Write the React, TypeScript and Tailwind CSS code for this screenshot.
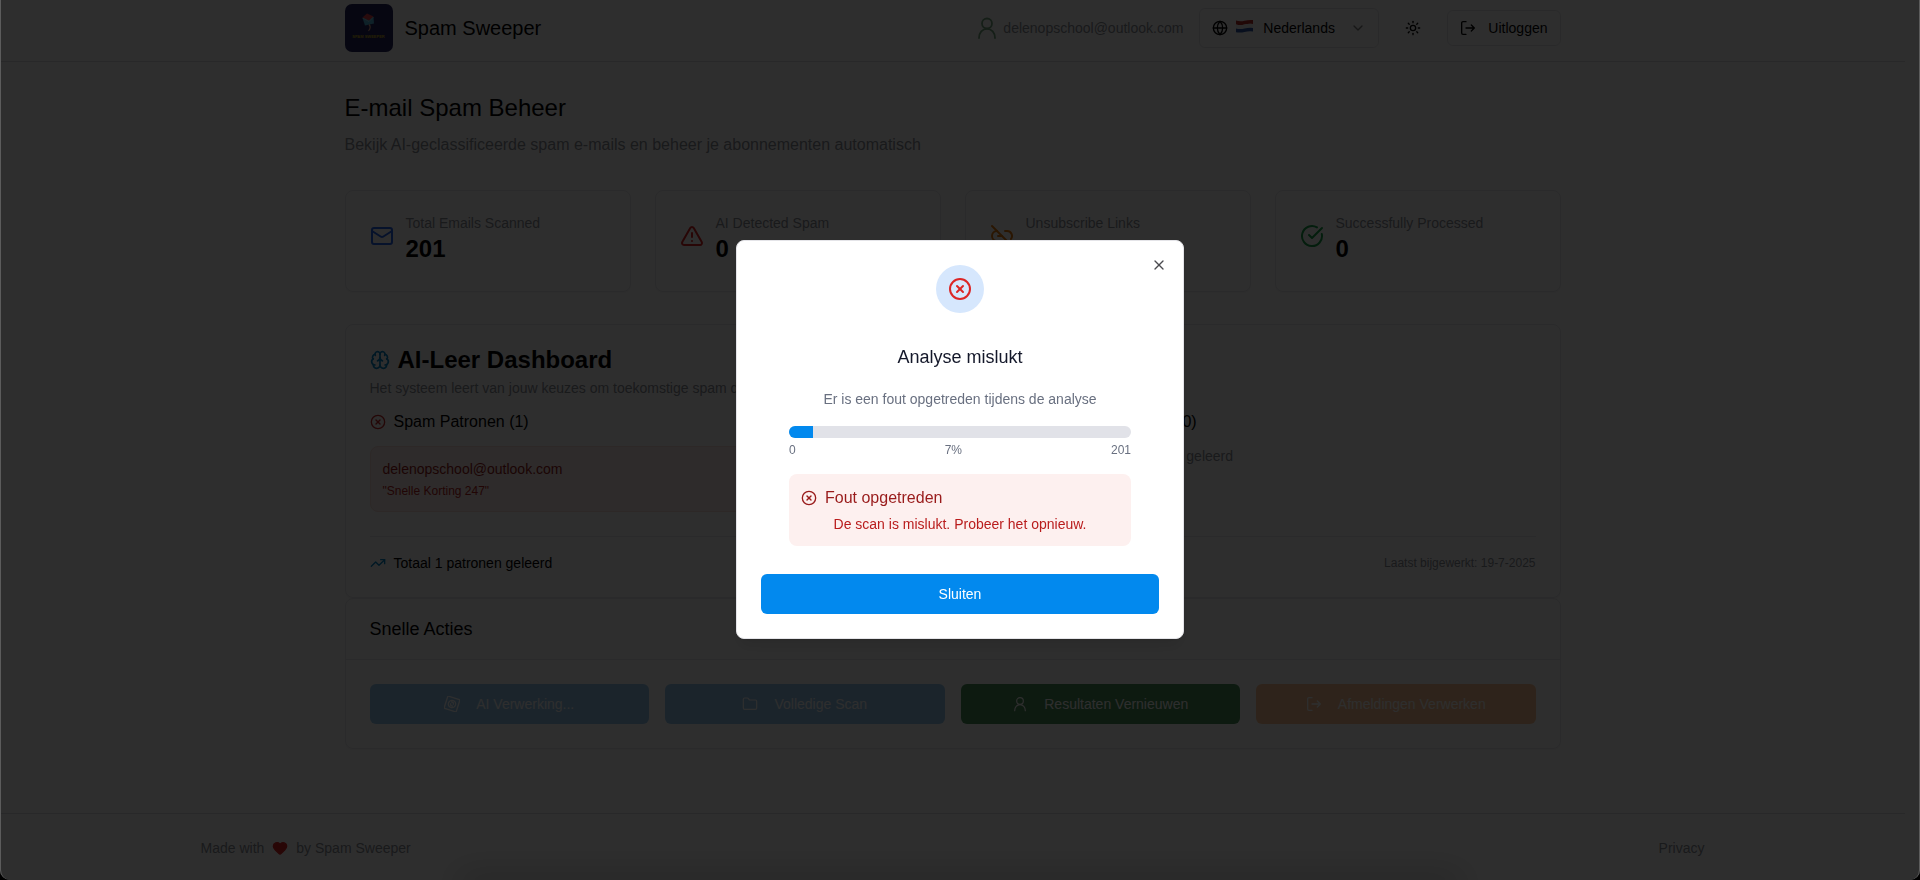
import React from "react";
import {
  Mail, TriangleAlert, CircleCheckBig, Brain, CircleX, TrendingUp, Globe, ChevronDown, Sun, X, Heart, Folder, Link2Off,
} from "lucide-react";

function Logo() {
  return (
    <svg viewBox="0 0 48 48" className="size-12 shrink-0" role="img" aria-label="Spam Sweeper logo">
      <rect width="48" height="48" rx="7" fill="#26265f" />
      <path d="M17.5 14 28.5 13 29 19.500 20 21.500Z" fill="#4fb4dc" />
      <path d="M17.500 13.500 22 9.500 28.500 12.500 24 16.500Z" fill="#e0404a" />
      <path d="M17.500 14 24 17.500 28.500 13" fill="none" stroke="#bfe4f4" strokeWidth="0.5" />
      <path d="M24 20.500c2 2 1.500 4-.5 6.500" stroke="#e0a890" strokeWidth="1.200" fill="none" />
      <text x="23.500" y="33.500" textAnchor="middle" fontSize="4" fontWeight="700" fill="#c9b01c" fontFamily="Liberation Sans, sans-serif">SPAM SWEEPER</text>
    </svg>
  );
}

function Flag() {
  return (
    <svg viewBox="0 0 17 14" className="mb-1 h-[14px] w-[17px] shrink-0" aria-hidden="true">
      <path d="M0 1.500Q4 3 8.500 1.800T17 1V5Q12.500 4.500 8.500 5.500T0 5.500Z" fill="#b82c2a" />
      <path d="M0 5.500Q4 6.500 8.500 5.500T17 5V9Q12.500 8.500 8.500 9.500T0 9.500Z" fill="#f4f4f4" />
      <path d="M0 9.500Q4 10.500 8.500 9.500T17 9V12.500Q12.500 12 8.500 13T0 13.300Z" fill="#2c56a8" />
    </svg>
  );
}

function UserIcon({ className }: { className?: string }) {
  return (
    <svg viewBox="0 0 24 24" className={className} fill="none" stroke="currentColor" strokeWidth="1.8" strokeLinecap="round" aria-hidden="true">
      <circle cx="12" cy="7.500" r="5" />
      <path d="M4 22c0-5.200 3.400-9.200 8-9.200s8 4 8 9.200" />
    </svg>
  );
}

function ExitIcon({ className }: { className?: string }) {
  return (
    <svg viewBox="0 0 24 24" className={className} fill="none" stroke="currentColor" strokeWidth="2" strokeLinecap="round" strokeLinejoin="round" aria-hidden="true">
      <path d="M9 2.500H4.500a2 2 0 0 0-2 2v15a2 2 0 0 0 2 2H9" />
      <path d="M9 12h12.500M17 7.500l4.500 4.500-4.500 4.500" />
    </svg>
  );
}

function SpinnerGlyph() {
  return (
    <svg viewBox="0 0 24 24" className="size-4" fill="none" stroke="currentColor" strokeWidth="2" aria-hidden="true">
      <g transform="rotate(18 12 12)">
        <rect x="2.500" y="2.500" width="19" height="19" rx="1" />
        <circle cx="12" cy="12" r="5.500" />
        <path d="M9.500 9.500c3-1.500 5 .5 4.500 3M14.500 14.500c-3 1.500-5-.5-4.500-3" />
      </g>
    </svg>
  );
}

const stats = [
  { label: "Total Emails Scanned", value: "201", icon: <Mail className="mt-[11px] size-6 text-[#2563eb]" /> },
  { label: "AI Detected Spam", value: "0", icon: <TriangleAlert className="mt-[11px] size-6 text-[#dc2626]" /> },
  { label: "Unsubscribe Links", value: "0", icon: <Link2Off className="mt-[11px] size-6 text-[#ea7a0c]" /> },
  { label: "Successfully Processed", value: "0", icon: <CircleCheckBig className="mt-[11px] size-6 text-[#16a34a]" /> },
];

const actions = [
  { label: "AI Verwerking...", icon: <SpinnerGlyph />, style: "bg-[#96c8ef] text-white" },
  { label: "Volledige Scan", icon: <Folder className="size-4" strokeWidth={1.75} />, style: "bg-[#96c8ef] text-white" },
  { label: "Resultaten Vernieuwen", icon: <UserIcon className="size-4" />, style: "bg-[#48905a] text-white" },
  { label: "Afmeldingen Verwerken", icon: <ExitIcon className="size-4" />, style: "bg-[#ffc494] text-white" },
];

function Header() {
  return (
    <header className="border-b border-[#dcdce0] pt-1 pb-[9px]">
      <div className="mx-auto flex max-w-[1280px] items-center justify-between px-8">
        <div className="flex items-center gap-3">
          <Logo />
          <span className="text-xl">Spam Sweeper</span>
        </div>
        <div className="flex items-center gap-4">
          <div className="flex items-center gap-1 text-[#8b8f98]">
            <UserIcon className="size-6 text-[#74a880]" />
            <span className="text-sm">delenopschool@outlook.com</span>
          </div>
          <button className="flex h-10 w-[180px] items-center rounded-md border border-[#e4e4e8] px-3 text-sm">
            <Globe className="mr-2 size-4" />
            <Flag />
            <span className="ml-2.5">Nederlands</span>
            <ChevronDown className="ml-auto size-4 opacity-50" />
          </button>
          <button aria-label="Thema" className="flex h-9 w-9 items-center justify-center">
            <Sun className="size-4" />
          </button>
          <button className="flex h-9 items-center gap-3 rounded-md border border-[#e4e4e8] px-3 text-sm">
            <ExitIcon className="size-4" />
            Uitloggen
          </button>
        </div>
      </div>
    </header>
  );
}

function ScanDialog() {
  return (
    <div className="fixed inset-0 flex items-center justify-center bg-black/[0.82] pb-px">
      <div role="dialog" aria-modal="true" aria-labelledby="dialog-title" className="relative w-full max-w-md rounded-lg border border-[#e4e4e8] bg-white p-6 text-center shadow-lg">
        <button aria-label="Close" className="absolute top-4 right-4 text-[#4b4b4f]">
          <X className="size-4" />
        </button>
        <div className="mx-auto flex size-12 items-center justify-center rounded-full bg-[#d6e7fd]">
          <CircleX className="size-6 text-[#dc2626]" />
        </div>
        <h2 id="dialog-title" className="mt-[30px] text-lg leading-7 text-[#14182a]">Analyse mislukt</h2>
        <div className="px-7">
          <p className="mt-[18px] text-sm text-[#697080]">Er is een fout opgetreden tijdens de analyse</p>
          <div role="progressbar" aria-label="Voortgang" aria-valuenow={7} className="mt-[17px] h-3 overflow-hidden rounded-full bg-[#e1e2e8]">
            <div className="h-full w-[7%] bg-[#0289ee]" />
          </div>
          <div className="mt-1 flex justify-between text-xs text-[#697080]">
            <span>0</span><span>7%</span><span>201</span>
          </div>
          <div className="mt-4 rounded-lg bg-[#fdf0ef] p-3">
            <div className="flex items-center gap-2 text-[#991b1b]">
              <CircleX className="size-4" />
              <span>Fout opgetreden</span>
            </div>
            <p className="mt-1 text-sm text-[#b91c1c]">De scan is mislukt. Probeer het opnieuw.</p>
          </div>
        </div>
        <button className="mt-7 h-10 w-full rounded-md bg-[#0289ee] text-sm text-white">Sluiten</button>
      </div>
    </div>
  );
}

function WindowFrame() {
  return (
    <div aria-hidden="true" className="pointer-events-none fixed inset-0 overflow-hidden">
      <div className="absolute -bottom-2 left-1/2 h-2 w-[1000px] -translate-x-1/2 shadow-[0_0_36px_4px_rgba(0,0,0,0.3)]" />
      <div className="absolute inset-0 rounded-b-[10px] border-x border-[#5c5c5c] shadow-[0_0_0_12px_#000]" />
    </div>
  );
}

export default function App() {
  return (
    <div className="min-h-screen bg-white font-['Liberation_Sans',Arial,sans-serif] text-[#030303]">
      <div className="mr-[15px]">
        <Header />
        <main className="mx-auto max-w-[1280px] px-8 pt-[30px]">
          <h1 className="text-2xl leading-8">E-mail Spam Beheer</h1>
          <p className="mt-[9px] text-[#8b8f98]">Bekijk AI-geclassificeerde spam e-mails en beheer je abonnementen automatisch</p>

          <section className="mt-[33px] grid grid-cols-4 gap-6">
            {stats.map((s) => (
              <div key={s.label} className="flex items-start gap-3 rounded-lg border border-[#e8e8ec] px-6 pt-[22px] pb-[26px] shadow-xs">
                {s.icon}
                <div>
                  <p className="text-sm text-[#8b8f98]">{s.label}</p>
                  <p className="text-2xl leading-8 font-bold">{s.value}</p>
                </div>
              </div>
            ))}
          </section>

          <section className="mt-8 rounded-lg border border-[#e8e8ec] px-6 pt-[19px] pb-6 shadow-xs">
            <h2 className="flex items-center gap-2 text-2xl leading-8 font-bold">
              <Brain className="size-5 text-[#0284c7]" />
              AI-Leer Dashboard
            </h2>
            <p className="mt-0.5 text-sm text-[#8b8f98]">Het systeem leert van jouw keuzes om toekomstige spam detectie te verbeteren</p>
            <div className="mt-3 grid grid-cols-2 gap-6">
              <div>
                <h3 className="flex items-center gap-2">
                  <CircleX className="size-4 text-[#c92a2a]" />
                  Spam Patronen (1)
                </h3>
                <div className="mt-3 rounded-lg border border-[#f6dbd6] bg-[#fbeeeb] p-3">
                  <p className="text-sm text-[#991b1b]">delenopschool@outlook.com</p>
                  <p className="mt-1 text-xs text-[#b91c1c]">"Snelle Korting 247"</p>
                </div>
              </div>
              <div>
                <h3 className="flex items-center gap-2">
                  <CircleCheckBig className="size-4 text-[#16a34a]" />
                  Veilige Afzender Patronen (0)
                </h3>
                <p className="mt-3 text-sm text-[#8b8f98]">Nog geen veilige afzenderpatronen geleerd</p>
              </div>
            </div>
            <div className="mt-6 flex items-center justify-between border-t border-[#e8e8ec] pt-4">
              <p className="flex items-center gap-2 text-sm">
                <TrendingUp className="size-4 text-[#0284c7]" />
                Totaal 1 patronen geleerd
              </p>
              <p className="text-xs text-[#8b8f98]">Laatst bijgewerkt: 19-7-2025</p>
            </div>
          </section>

          <section className="rounded-lg border border-[#e8e8ec] shadow-xs">
            <h2 className="border-b border-[#e8e8ec] px-6 py-4 text-lg leading-7">Snelle Acties</h2>
            <div className="grid grid-cols-4 gap-4 p-6">
              {actions.map((a) => (
                <button key={a.label} className={`flex h-10 items-center justify-center gap-4 rounded-md text-sm ${a.style}`}>
                  {a.icon}
                  {a.label}
                </button>
              ))}
            </div>
          </section>
        </main>
        <footer className="mt-16 border-t border-[#dcdce0]">
          <div className="mx-auto flex max-w-[1536px] items-center justify-between px-4 pt-6 pb-5 text-sm text-[#8b8f98]">
            <p className="flex items-center gap-2">
              Made with <Heart className="size-4 fill-[#dc2626] text-[#dc2626]" /> by Spam Sweeper
            </p>
            <a href="#privacy">Privacy</a>
          </div>
        </footer>
      </div>
      <ScanDialog />
      <WindowFrame />
    </div>
  );
}
